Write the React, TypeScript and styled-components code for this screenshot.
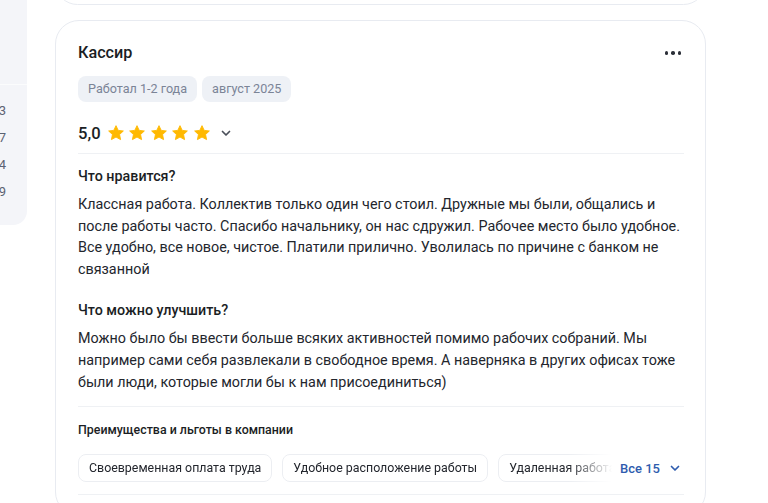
import React from "react";
import styled, { createGlobalStyle } from "styled-components";

const GlobalStyle = createGlobalStyle`
  html, body {
    margin: 0;
    padding: 0;
    background: #ffffff;
    font-family: Roboto, "Noto Sans", Arial, sans-serif;
    color: #1f2229;
  }
`;

const Page = styled.div`
  height: 503px;
  overflow: hidden;
  display: flex;
  align-items: flex-start;
  gap: 28px;
`;

const Sidebar = styled.aside`
  width: 27px;
  flex-shrink: 0;
  background: #f4f5f9;
  border-bottom-right-radius: 14px;
  overflow: hidden;
  padding-top: 84px;
  padding-bottom: 20px;
`;

const SidebarDivider = styled.div`
  height: 1px;
  background: #fbfcfd;
  margin-bottom: 12px;
`;

const SidebarRow = styled.div`
  height: 27px;
  display: flex;
  align-items: center;
  justify-content: flex-end;
  padding-right: 21px;
  font-size: 13px;
  color: #5c6373;
  white-space: nowrap;
`;

const Feed = styled.main`
  width: 651px;
  display: flex;
  flex-direction: column;
  gap: 15px;
  margin-top: -40px;
`;

const Card = styled.section<{ $stub?: boolean }>`
  border: 1px solid #e8ebf1;
  border-radius: 24px;
  background: #ffffff;
  padding: 20px 21px 20px 22px;
  height: ${(p) => (p.$stub ? "45px" : "auto")};
  box-sizing: border-box;
`;

const Header = styled.header`
  display: flex;
  align-items: center;
  justify-content: space-between;
`;

const Title = styled.h2`
  margin: 0;
  font-size: 16.2px;
  line-height: 24px;
  font-weight: 500;
  color: #1b1e24;
`;

const MoreButton = styled.button`
  border: none;
  background: none;
  padding: 0;
  margin-right: 3px;
  display: flex;
  gap: 3px;
  cursor: pointer;
`;

const Dot = styled.span`
  width: 3.5px;
  height: 3.5px;
  border-radius: 50%;
  background: #2b2f38;
`;

const Tags = styled.div`
  display: flex;
  gap: 5px;
  margin-top: 11px;
`;

const Tag = styled.span`
  height: 26px;
  line-height: 26px;
  padding: 0 10px;
  border-radius: 8px;
  background: #eef1f6;
  color: #7b8496;
  font-size: 12.6px;
`;

const RatingRow = styled.div`
  display: flex;
  align-items: center;
  height: 24px;
  margin-top: 19px;
`;

const Score = styled.span`
  font-size: 16.6px;
  font-weight: 500;
  color: #1b1e24;
  margin-right: 6px;
`;

const Stars = styled.div`
  display: flex;
  gap: 3.5px;
`;

const Chevron = styled.svg<{ $color?: string }>`
  width: 12px;
  height: 12px;
  margin-left: 9px;
  color: ${(p) => p.$color ?? "#4a4f5a"};
`;

const Divider = styled.hr<{ $top: number }>`
  border: none;
  height: 1px;
  background: #eff1f4;
  margin: ${(p) => p.$top}px 0 0;
`;

const Heading = styled.h3<{ $top: number }>`
  margin: ${(p) => p.$top}px 0 0;
  font-size: 14.3px;
  line-height: 20px;
  font-weight: 500;
  color: #1b1e24;
`;

const Paragraph = styled.p`
  margin: 8px 0 0;
  font-size: 14.35px;
  line-height: 21.6px;
  color: #23262d;
`;

const Subheading = styled.h4`
  margin: 14px 0 0;
  font-size: 12.4px;
  line-height: 18px;
  font-weight: 500;
  color: #1b1e24;
`;

const PerksRow = styled.div`
  display: flex;
  align-items: center;
  margin-top: 15px;
`;

const PerksTrack = styled.div`
  width: 534px;
  display: flex;
  gap: 10px;
  overflow: hidden;
  mask-image: linear-gradient(90deg, #000 0, #000 490px, transparent 534px);
`;

const Perk = styled.span`
  flex-shrink: 0;
  height: 26px;
  line-height: 26px;
  padding: 0 10px;
  border: 1px solid #eceef2;
  border-radius: 8px;
  font-size: 12.4px;
  color: #23262d;
  white-space: nowrap;
`;

const ShowAll = styled.button`
  border: none;
  background: none;
  padding: 0 0 0 8px;
  display: flex;
  align-items: center;
  font-family: inherit;
  font-size: 13px;
  font-weight: 500;
  color: #2f5cae;
  cursor: pointer;
`;

const StarIcon = () => (
  <svg width="18" height="18" viewBox="0 0 24 24">
    <path
      d="M12 2.2l2.95 6.3 6.85.8-5.05 4.7 1.35 6.8L12 17.4l-6.1 3.4 1.35-6.8L2.2 9.3l6.85-.8z"
      fill="#ffb901"
      stroke="#ffb901"
      strokeWidth="1.2"
      strokeLinejoin="round"
    />
  </svg>
);

const ChevronDown = ({ color }: { color?: string }) => (
  <Chevron viewBox="0 0 12 12" $color={color}>
    <path
      d="M2.5 4.5L6 8l3.5-3.5"
      fill="none"
      stroke="currentColor"
      strokeWidth="1.7"
      strokeLinecap="round"
      strokeLinejoin="round"
    />
  </Chevron>
);

const sidebarCounts = ["13", "27", "14", "19"];

const perks = [
  "Своевременная оплата труда",
  "Удобное расположение работы",
  "Удаленная работа",
];

export default function App() {
  return (
    <>
      <GlobalStyle />
      <Page>
        <Sidebar>
          <SidebarDivider />
          {sidebarCounts.map((n) => (
            <SidebarRow key={n}>{n}</SidebarRow>
          ))}
        </Sidebar>

        <Feed>
          <Card $stub />

          <Card>
            <Header>
              <Title>Кассир</Title>
              <MoreButton aria-label="Ещё">
                <Dot />
                <Dot />
                <Dot />
              </MoreButton>
            </Header>

            <Tags>
              <Tag>Работал 1-2 года</Tag>
              <Tag>август 2025</Tag>
            </Tags>

            <RatingRow>
              <Score>5,0</Score>
              <Stars>
                {[0, 1, 2, 3, 4].map((i) => (
                  <StarIcon key={i} />
                ))}
              </Stars>
              <ChevronDown />
            </RatingRow>

            <Divider $top={8} />

            <Heading $top={12}>Что нравится?</Heading>
            <Paragraph>
              Классная работа. Коллектив только один чего стоил. Дружные мы
              были, общались и после работы часто. Спасибо начальнику, он нас
              сдружил. Рабочее место было удобное. Все удобно, все новое,
              чистое. Платили прилично. Уволилась по причине с банком не
              связанной
            </Paragraph>

            <Heading $top={20}>Что можно улучшить?</Heading>
            <Paragraph>
              Можно было бы ввести больше всяких активностей помимо рабочих
              собраний. Мы например сами себя развлекали в свободное время. А
              наверняка в других офисах тоже были люди, которые могли бы к нам
              присоединиться)
            </Paragraph>

            <Divider $top={13} />

            <Subheading>Преимущества и льготы в компании</Subheading>
            <PerksRow>
              <PerksTrack>
                {perks.map((p) => (
                  <Perk key={p}>{p}</Perk>
                ))}
              </PerksTrack>
              <ShowAll>
                Все 15
                <ChevronDown color="#2f5cae" />
              </ShowAll>
            </PerksRow>

            <Divider $top={12} />
          </Card>
        </Feed>
      </Page>
    </>
  );
}
